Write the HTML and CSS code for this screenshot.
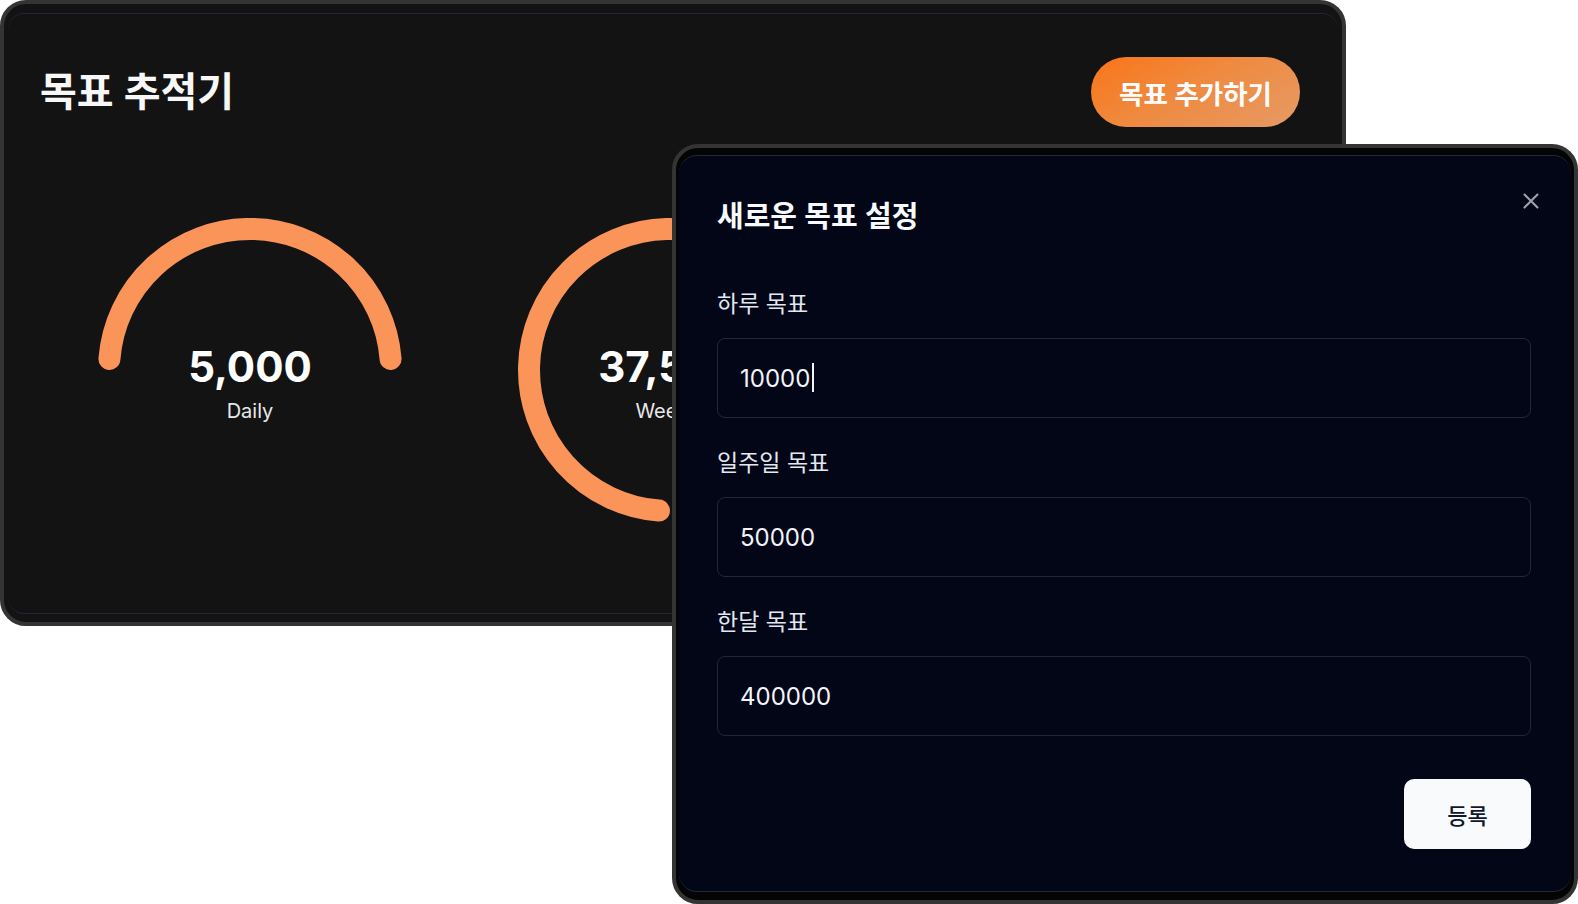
FILE: index.html
```html
<!DOCTYPE html>
<html lang="ko">
<head>
<meta charset="utf-8">
<title>목표 추적기</title>
<link rel="stylesheet" href="styles.css">
</head>
<body>
<div class="desk">
  <section class="win win-main">
    <div class="panel panel-main">
      <header class="head">
        <h1 class="title">목표 추적기</h1>
        <button class="add" type="button">목표 추가하기</button>
      </header>
      <div class="gauges">
        <div class="gauge">
          <svg class="ring" width="304" height="304" viewBox="0 0 304 304">
            <path d="M 11.43 140.94 A 141 141 0 0 1 292.57 140.94" fill="none" stroke="#fb9459" stroke-width="22" stroke-linecap="round"/>
          </svg>
          <div class="gv"><span class="num">5,000</span><span class="cap">Daily</span></div>
        </div>
        <div class="gauge">
          <svg class="ring" width="304" height="304" viewBox="0 0 304 304">
            <path d="M 140.94 292.57 A 141 141 0 1 1 292.57 140.94" fill="none" stroke="#fb9459" stroke-width="22" stroke-linecap="round"/>
          </svg>
          <div class="gv"><span class="num">37,500</span><span class="cap">Weekly</span></div>
        </div>
        <div class="gauge">
          <svg class="ring" width="304" height="304" viewBox="0 0 304 304">
            <path d="M 11.43 140.94 A 141 141 0 0 1 292.57 140.94" fill="none" stroke="#fb9459" stroke-width="22" stroke-linecap="round"/>
          </svg>
          <div class="gv"><span class="num">150,000</span><span class="cap">Monthly</span></div>
        </div>
      </div>
    </div>
  </section>

  <section class="win win-modal">
    <div class="panel panel-modal">
      <h2 class="mtitle">새로운 목표 설정</h2>
      <button class="close" type="button" aria-label="닫기">
        <svg width="18" height="18" viewBox="0 0 18 18"><path d="M2.5 2.5 L15.5 15.5 M15.5 2.5 L2.5 15.5" stroke="#a3a3ad" stroke-width="2" stroke-linecap="round" fill="none"/></svg>
      </button>
      <form class="form">
        <div class="field">
          <label class="lbl" for="daily">하루 목표</label>
          <div class="input-wrap">
            <input class="input" id="daily" type="text" value="10000">
            <span class="caret"></span>
          </div>
        </div>
        <div class="field">
          <label class="lbl" for="weekly">일주일 목표</label>
          <div class="input-wrap">
            <input class="input" id="weekly" type="text" value="50000">
          </div>
        </div>
        <div class="field">
          <label class="lbl" for="monthly">한달 목표</label>
          <div class="input-wrap">
            <input class="input" id="monthly" type="text" value="400000">
          </div>
        </div>
        <div class="actions">
          <button class="submit" type="button">등록</button>
        </div>
      </form>
    </div>
  </section>
</div>
</body>
</html>
```

FILE: styles.css
```css
* { box-sizing: border-box; }

body {
  margin: 0;
  background: #ffffff;
  font-family: Inter, "Noto Sans CJK KR", sans-serif;
}

.desk {
  position: relative;
  width: 1578px;
  height: 904px;
  overflow: hidden;
}

.win {
  position: absolute;
  border: 4px solid #343434;
  border-radius: 26px;
  overflow: hidden;
}

.win-main {
  left: 0;
  top: 0;
  width: 1346px;
  height: 626px;
  background: #131313;
  padding: 9px 4px 8px 4px;
}

.panel {
  height: 100%;
  border-top: 1px solid #1f2838;
  border-bottom: 1px solid #1f2838;
  border-radius: 16px;
}

.panel-main {
  padding: 43px 38px 0 32px;
}

.head {
  display: flex;
  justify-content: space-between;
  align-items: center;
  height: 70px;
}

.title {
  margin: 0;
  font-size: 40px;
  line-height: 1;
  font-weight: 600;
  color: #f7f7f7;
}

.add {
  width: 209px;
  height: 70px;
  border: none;
  border-radius: 35px;
  background: linear-gradient(150deg, #f97518 0%, #ef8a3f 45%, #e69a66 100%);
  color: #ffffff;
  font-family: inherit;
  font-size: 26.5px;
  font-weight: 600;
}

.gauges {
  display: grid;
  grid-template-columns: repeat(3, 1fr);
  margin-top: 91px;
}

.gauge {
  display: grid;
  justify-items: center;
}

.gauge > * {
  grid-area: 1 / 1;
}

.gv {
  display: flex;
  flex-direction: column;
  align-items: center;
  padding-top: 125px;
}

.num {
  font-size: 42px;
  line-height: 48px;
  font-weight: 700;
  color: #ffffff;
}

.cap {
  margin-top: 8px;
  font-size: 20px;
  line-height: 24px;
  color: #e8e8e8;
}

.win-modal {
  left: 672px;
  top: 144px;
  width: 906px;
  height: 760px;
  background: #040404;
  padding: 7px 3px 8px 3px;
}

.panel-modal {
  background: #020617;
  border-color: #1e293b;
  border-radius: 18px;
  padding: 43px 40px 0 38px;
}

.mtitle {
  margin: 0;
  font-size: 29px;
  line-height: 36px;
  font-weight: 600;
  color: #f8fafc;
}

.close {
  position: absolute;
  top: 44px;
  right: 34px;
  width: 18px;
  height: 18px;
  padding: 0;
  border: none;
  background: none;
  display: flex;
}

.form {
  margin-top: 54px;
}

.field + .field {
  margin-top: 30px;
}

.lbl {
  display: block;
  margin-bottom: 19px;
  font-size: 23px;
  line-height: 30px;
  color: #e2e8f0;
}

.input-wrap {
  position: relative;
}

.input {
  display: block;
  width: 100%;
  height: 80px;
  padding: 0 22px;
  border: 1px solid #1e293b;
  border-radius: 8px;
  background: transparent;
  color: #f1f5f9;
  font-family: inherit;
  font-size: 24px;
  outline: none;
}

.caret {
  position: absolute;
  left: 95px;
  top: 25px;
  width: 2px;
  height: 29px;
  background: #f1f5f9;
}

.actions {
  display: flex;
  justify-content: flex-end;
  margin-top: 43px;
}

.submit {
  width: 127px;
  height: 70px;
  border: none;
  border-radius: 10px;
  background: #f8fafc;
  color: #0f172a;
  font-family: inherit;
  font-size: 22px;
  font-weight: 500;
}
```
